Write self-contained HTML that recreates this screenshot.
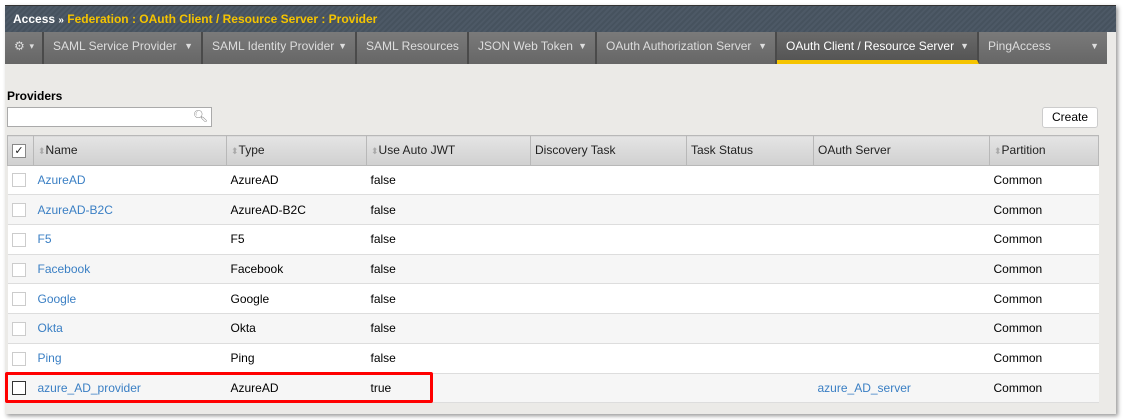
<!DOCTYPE html><html><head><style>
body{margin:0;width:1127px;height:420px;background:#fff;font-family:"Liberation Sans",Arial,sans-serif;font-size:12px;position:relative;overflow:hidden}
.frame{position:absolute;left:5px;top:5px;width:1111px;height:409px;background:#ebeae7;box-shadow:2px 2px 4px #999}
.hdr{position:absolute;left:0;top:0;width:1111px;height:27px;background:repeating-linear-gradient(135deg,#4d5966 0 2px,#46525e 2px 4px);border-top:1px solid #333;color:#fff;font-weight:bold;font-size:12px;line-height:27px;padding-left:8px;box-sizing:border-box}
.hdr span{color:#f5c400}
.nav{position:absolute;left:0;top:27px;width:1102px;height:32px;background:linear-gradient(#777,#5f5f5f)}
.tab{position:absolute;top:0;height:32px;line-height:28px;color:#ddd;font-size:12px;padding-left:9px;box-sizing:border-box;border-right:2px solid #4a4a4a;background:linear-gradient(#7a7a7a,#666)}
.tab i{font-style:normal;font-size:9px;position:absolute;right:8px;top:0;color:#ddd}
.act{background:linear-gradient(#6a6a6a,#555);color:#fff;border-bottom:4px solid #f5c400}
.lbl{position:absolute;left:7px;top:89px;font-weight:bold;font-size:12px}
.search{position:absolute;left:7px;top:107px;width:205px;height:20px;background:#fff;border:1px solid #aaa;box-sizing:border-box}
.create{position:absolute;left:1042px;top:107px;width:56px;height:21px;background:#fff;border:1px solid #ccc;border-radius:3px;box-sizing:border-box;text-align:center;line-height:19px;font-size:12px}
table{position:absolute;left:7px;top:135px;width:1091px;border-collapse:collapse;font-size:12px;table-layout:fixed}
tr{height:29.7px}
th{background:linear-gradient(#e4e4e4,#d0d0d0);text-align:left;font-weight:normal;border:1px solid #b8b8b8;padding:0 4px;color:#222}
th s{text-decoration:none;color:#aaa;font-size:9px}
td{padding:0 4px;border-bottom:1px solid #ddd;background:#fff;white-space:nowrap}
tr:nth-child(odd) td{background:#f6f6f6}
a{color:#3a7fc4}
.cb{display:inline-block;width:12px;height:12px;border:1px solid #ccc;background:#fff;vertical-align:middle;font-size:11px;line-height:12px;text-align:center}
.red{position:absolute;left:5px;top:372px;width:428px;height:31px;border:3px solid #f00;box-sizing:border-box;border-radius:2px}
</style></head><body>
<div class="frame">
<div class="hdr">Access <small>»</small> <span>Federation : OAuth Client / Resource Server : Provider</span></div>
<div class="nav">
<div class="tab" style="left:0;width:39px">⚙ <i>▾</i></div>
<div class="tab" style="left:39px;width:159px">SAML Service Provider<i>▼</i></div>
<div class="tab" style="left:198px;width:154px">SAML Identity Provider<i>▼</i></div>
<div class="tab" style="left:352px;width:112px">SAML Resources</div>
<div class="tab" style="left:464px;width:128px">JSON Web Token<i>▼</i></div>
<div class="tab" style="left:592px;width:180px">OAuth Authorization Server<i>▼</i></div>
<div class="tab act" style="left:772px;width:202px">OAuth Client / Resource Server<i>▼</i></div>
<div class="tab" style="left:974px;width:128px;border-right:0">PingAccess<i>▼</i></div>
</div>
</div>
<div class="lbl">Providers</div>
<div class="search"><span style="position:absolute;right:3px;top:1px;color:#888">🔍︎</span></div>
<div class="create">Create</div>
<table>
<colgroup><col style="width:26px"><col style="width:193px"><col style="width:140px"><col style="width:164px"><col style="width:156px"><col style="width:127px"><col style="width:176px"><col style="width:109px"></colgroup>
<tr><th><span class="cb" style="border-color:#888">✓</span></th><th><s>⬍</s>Name</th><th><s>⬍</s>Type</th><th><s>⬍</s>Use Auto JWT</th><th>Discovery Task</th><th>Task Status</th><th>OAuth Server</th><th><s>⬍</s>Partition</th></tr>
<tr><td><span class="cb"></span></td><td><a>AzureAD</a></td><td>AzureAD</td><td>false</td><td></td><td></td><td></td><td>Common</td></tr>
<tr><td><span class="cb"></span></td><td><a>AzureAD-B2C</a></td><td>AzureAD-B2C</td><td>false</td><td></td><td></td><td></td><td>Common</td></tr>
<tr><td><span class="cb"></span></td><td><a>F5</a></td><td>F5</td><td>false</td><td></td><td></td><td></td><td>Common</td></tr>
<tr><td><span class="cb"></span></td><td><a>Facebook</a></td><td>Facebook</td><td>false</td><td></td><td></td><td></td><td>Common</td></tr>
<tr><td><span class="cb"></span></td><td><a>Google</a></td><td>Google</td><td>false</td><td></td><td></td><td></td><td>Common</td></tr>
<tr><td><span class="cb"></span></td><td><a>Okta</a></td><td>Okta</td><td>false</td><td></td><td></td><td></td><td>Common</td></tr>
<tr><td><span class="cb"></span></td><td><a>Ping</a></td><td>Ping</td><td>false</td><td></td><td></td><td></td><td>Common</td></tr>
<tr><td><span class="cb" style="border-color:#333"></span></td><td><a>azure_AD_provider</a></td><td>AzureAD</td><td>true</td><td></td><td></td><td><a>azure_AD_server</a></td><td>Common</td></tr>
</table>
<div class="red"></div>
</body></html>
